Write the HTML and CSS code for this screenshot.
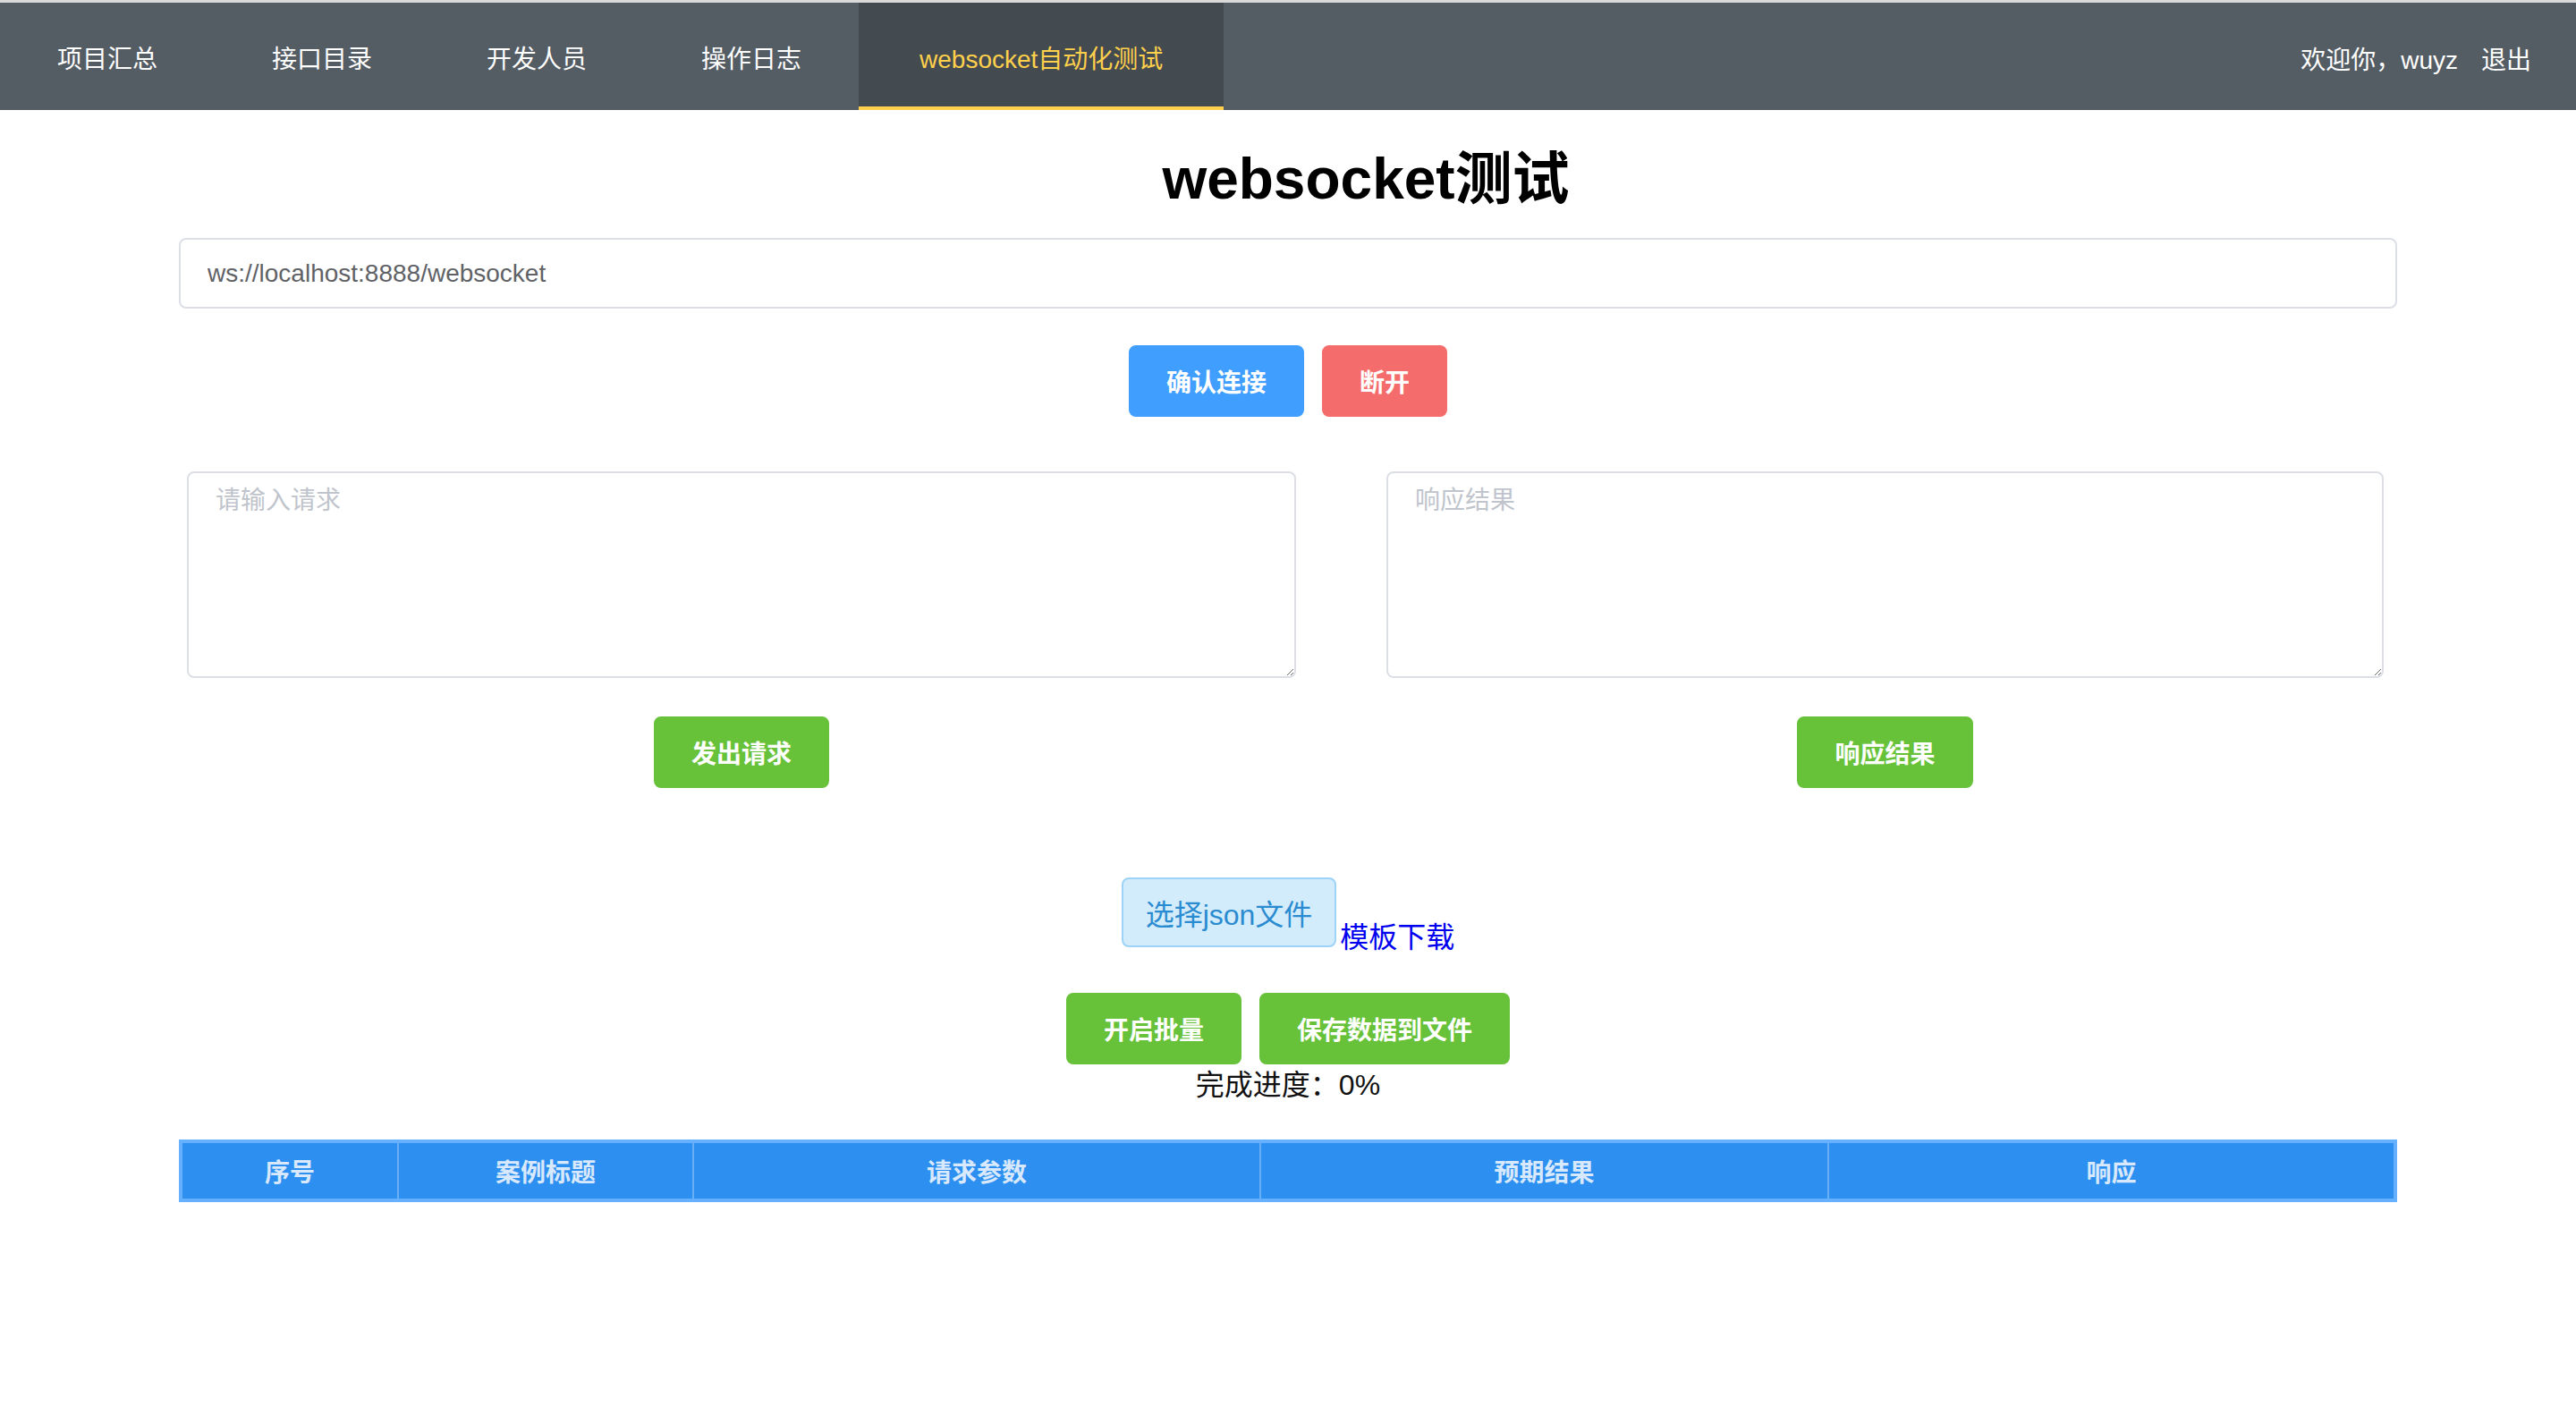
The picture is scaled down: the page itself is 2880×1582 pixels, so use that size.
FILE: index.html
```html
<!DOCTYPE html>
<html lang="zh-CN">
<head>
<meta charset="utf-8">
<title>websocket自动化测试</title>
<link rel="stylesheet" href="styles.css">
</head>
<body>
<header class="topbar">
  <nav class="menu">
    <a class="menu-item">项目汇总</a>
    <a class="menu-item">接口目录</a>
    <a class="menu-item">开发人员</a>
    <a class="menu-item">操作日志</a>
    <a class="menu-item active">websocket自动化测试</a>
  </nav>
  <div class="user">
    <span>欢迎你，wuyz</span>
    <a class="logout">退出</a>
  </div>
</header>

<main class="page">
  <h1 class="title">websocket测试</h1>
  <input class="url-input" type="text" value="ws://localhost:8888/websocket">

  <div class="btn-row connect-row">
    <button class="btn btn-primary">确认连接</button>
    <button class="btn btn-danger">断开</button>
  </div>

  <div class="io-row">
    <div class="io-col">
      <textarea class="io-text" placeholder="请输入请求"></textarea>
      <button class="btn btn-success">发出请求</button>
    </div>
    <div class="io-col">
      <textarea class="io-text" placeholder="响应结果"></textarea>
      <button class="btn btn-success">响应结果</button>
    </div>
  </div>

  <div class="file-row">
    <button class="file-btn">选择json文件</button>
    <a class="tpl-link">模板下载</a>
  </div>

  <div class="btn-row batch-row">
    <button class="btn btn-success">开启批量</button>
    <button class="btn btn-success">保存数据到文件</button>
  </div>
  <div class="progress">完成进度：0%</div>

  <table class="case-table">
    <colgroup>
      <col class="c1"><col class="c2"><col class="c3"><col class="c4"><col class="c5">
    </colgroup>
    <thead>
      <tr><th>序号</th><th>案例标题</th><th>请求参数</th><th>预期结果</th><th>响应</th></tr>
    </thead>
  </table>
</main>
</body>
</html>
```

FILE: styles.css
```css
* { box-sizing: border-box; }

body {
  margin: 0;
  background: #fff;
  font-family: "Liberation Sans", "Noto Sans CJK SC", sans-serif;
}

.topbar {
  border-top: 3px solid #dadada;
  background: #545c64;
  height: 123px;
  display: flex;
  justify-content: space-between;
  align-items: stretch;
}

.menu { display: flex; }

.menu-item {
  display: block;
  padding: 12px 64px 0;
  line-height: 104px;
  border-bottom: 4px solid transparent;
  color: #fff;
  font-size: 28px;
  text-decoration: none;
}

.menu-item.active {
  padding: 12px 68px 0;
  background: #434a50;
  color: #ffd04b;
  border-bottom-color: #ffd04b;
}

.user {
  display: flex;
  align-items: center;
  gap: 26px;
  padding: 4px 50px 0 0;
  color: #fff;
  font-size: 28px;
}

.logout { color: #fff; }

.page {
  width: 2480px;
  margin: 0 auto;
}

.title {
  margin: 37px 0 0;
  padding-left: 174px;
  text-align: center;
  font-size: 64px;
  line-height: 80px;
  font-weight: bold;
  color: #000;
}

.url-input {
  display: block;
  width: 100%;
  height: 79px;
  margin-top: 26px;
  padding: 0 30px;
  border: 2px solid #dcdfe6;
  border-radius: 8px;
  font-family: inherit;
  font-size: 28px;
  color: #606266;
  outline: none;
}

.btn-row {
  display: flex;
  justify-content: center;
  gap: 20px;
}

.connect-row { margin-top: 41px; }

.btn {
  height: 80px;
  padding: 0 40px;
  border: 2px solid transparent;
  border-radius: 8px;
  font-family: inherit;
  font-size: 28px;
  font-weight: bold;
  color: #fff;
}

.btn-primary { background: #409eff; border-color: #409eff; }
.btn-danger { background: #f56c6c; border-color: #f56c6c; }
.btn-success { background: #67c23a; border-color: #67c23a; }

.io-row {
  display: grid;
  grid-template-columns: 1240px 1115px;
  column-gap: 101px;
  padding-left: 9px;
  margin-top: 61px;
}

.io-col {
  display: flex;
  flex-direction: column;
  align-items: center;
  gap: 43px;
}

.io-text {
  display: block;
  width: 100%;
  height: 231px;
  padding: 10px 30px;
  border: 2px solid #dcdfe6;
  border-radius: 8px;
  font-family: inherit;
  font-size: 28px;
  line-height: 42px;
  color: #606266;
  outline: none;
}

.io-text::placeholder { color: #c0c4cc; }

.file-row {
  display: flex;
  justify-content: center;
  align-items: flex-end;
  margin-top: 100px;
}

.file-btn {
  height: 78px;
  padding: 0 25px;
  border: 2px solid #9dd3f6;
  border-radius: 8px;
  background: #d3ecfc;
  color: #2a8bd0;
  font-family: inherit;
  font-size: 32px;
}

.tpl-link {
  font-size: 32px;
  line-height: 22px;
  color: #0000ee;
  margin-left: 4px;
}

.batch-row { margin-top: 51px; }

.progress {
  margin-top: 1px;
  text-align: center;
  font-size: 32px;
  line-height: 44px;
  color: #111;
}

.case-table {
  width: 2476px;
  margin-top: 39px;
  border-collapse: collapse;
  table-layout: fixed;
  border: 4px solid #66b1ff;
}

.c1 { width: 243px; }
.c2 { width: 330px; }
.c3 { width: 634px; }
.c4 { width: 635px; }
.c5 { width: 634px; }

.case-table th {
  height: 66px;
  padding: 0;
  background: #2d8ff0;
  border-left: 2px solid #6aaef6;
  color: #d8e9fd;
  font-size: 28px;
  font-weight: bold;
  text-align: center;
}

.case-table th:first-child { border-left: none; }
```
